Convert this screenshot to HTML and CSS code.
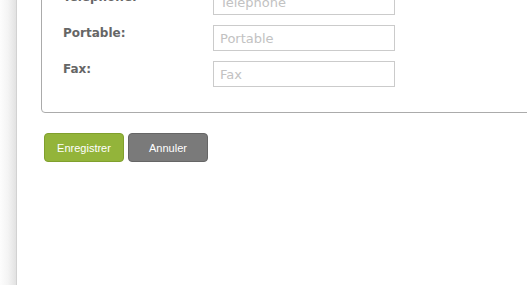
FILE: index.html
```html
<!DOCTYPE html>
<html lang="fr">
<head>
<meta charset="utf-8">
<title>Formulaire</title>
<link rel="stylesheet" href="styles.css">
</head>
<body>
<div class="page">
  <div class="shade"></div>
  <div class="content">
    <div class="box">
      <div class="rows">
        <label class="lbl" for="tel">Telephone:</label>
        <input class="field" id="tel" type="text" placeholder="Telephone">
        <label class="lbl" for="port">Portable:</label>
        <input class="field" id="port" type="text" placeholder="Portable">
        <label class="lbl" for="fax">Fax:</label>
        <input class="field" id="fax" type="text" placeholder="Fax">
      </div>
    </div>
    <div class="actions">
      <button class="btn btn-save" type="button">Enregistrer</button>
      <button class="btn btn-cancel" type="button">Annuler</button>
    </div>
  </div>
</div>
</body>
</html>
```
FILE: styles.css
```css
html, body {
  margin: 0;
  padding: 0;
  background: #fff;
  overflow: hidden;
}
.page {
  display: flex;
  height: 285px;
  overflow: hidden;
}
.shade {
  flex: 0 0 16px;
  background: linear-gradient(to right, #fdfdfd 0%, #f4f4f4 50%, #e2e2e2 100%);
  border-right: 1px solid #d2d2d2;
}
.content {
  flex: 1 1 auto;
  padding-left: 24px;
  min-width: 0;
}
.box {
  margin-top: -32px;
  width: 620px;
  border: 1px solid #ababab;
  border-radius: 4px;
  padding: 20px 0 25px 21px;
}
.rows {
  display: grid;
  grid-template-columns: 150px 182px;
  row-gap: 10px;
  align-items: start;
}
.lbl {
  font-family: "DejaVu Sans", Verdana, sans-serif;
  font-weight: bold;
  font-size: 12px;
  line-height: 14px;
  padding-top: 1px;
  color: #666;
}
.field {
  box-sizing: border-box;
  width: 182px;
  height: 26px;
  margin: 0;
  border: 1px solid #cbcbcb;
  border-radius: 0;
  padding: 0 6px;
  font-family: "DejaVu Sans", Verdana, sans-serif;
  font-size: 13px;
  color: #444;
  background: #fff;
  outline: none;
}
.field::placeholder {
  color: #c2c2c2;
}
.actions {
  display: flex;
  gap: 4px;
  margin: 20px 0 0 3px;
}
.btn {
  box-sizing: border-box;
  width: 80px;
  height: 29px;
  border-radius: 4px;
  border: 1px solid;
  font-family: "Liberation Sans", Arial, sans-serif;
  font-size: 11px;
  color: #fff;
  padding: 0;
  cursor: pointer;
}
.btn-save {
  background: #93b43a;
  border-color: #80a02d;
}
.btn-cancel {
  background: #7a7a7a;
  border-color: #666;
}
```
